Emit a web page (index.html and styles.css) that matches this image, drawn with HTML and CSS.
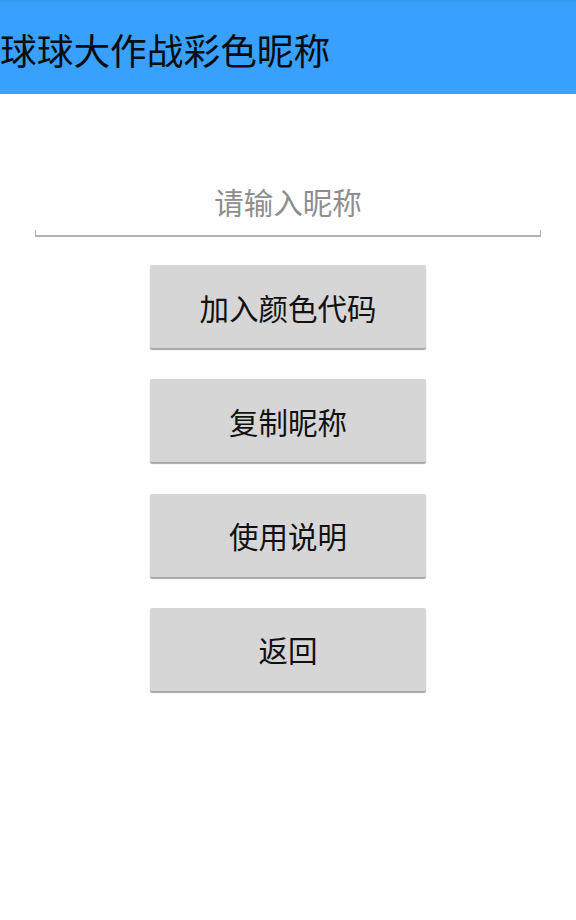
FILE: index.html
```html
<!DOCTYPE html>
<html lang="zh-CN">
<head>
<meta charset="utf-8">
<title>球球大作战彩色昵称</title>
<link rel="stylesheet" href="styles.css">
</head>
<body>
<header class="appbar">
  <h1 class="title">球球大作战彩色昵称</h1>
</header>
<main class="content">
  <div class="field">
    <input class="nick-input" type="text" placeholder="请输入昵称">
    <div class="underline"></div>
  </div>
  <div class="buttons">
    <button class="btn" type="button">加入颜色代码</button>
    <button class="btn" type="button">复制昵称</button>
    <button class="btn" type="button">使用说明</button>
    <button class="btn" type="button">返回</button>
  </div>
</main>
</body>
</html>
```

FILE: styles.css
```css
html, body {
  margin: 0;
  padding: 0;
  background: #ffffff;
}
body {
  font-family: "Noto Sans CJK SC", "Noto Sans", sans-serif;
  width: 576px;
  height: 920px;
  overflow: hidden;
}
.appbar {
  height: 92px;
  background: #38a0fd;
  border-top: 2px solid #3497f0;
  display: flex;
  align-items: center;
}
.title {
  margin: 0;
  padding: 0;
  font-size: 36.7px;
  font-weight: 400;
  color: #0c0c0c;
  line-height: 1;
  position: relative;
  top: 1px;
}
.content {
  display: flex;
  flex-direction: column;
  align-items: center;
}
.field {
  width: 506px;
  margin-top: 78px;
  display: flex;
  flex-direction: column;
}
.nick-input {
  border: none;
  outline: none;
  background: transparent;
  font-family: "Noto Sans CJK SC", "Noto Sans", sans-serif;
  font-size: 29.5px;
  text-align: center;
  height: 58px;
  padding: 0;
  margin: 0;
  color: #222;
}
.nick-input::placeholder {
  color: #8e8e8e;
}
.underline {
  height: 5px;
  border-left: 1.5px solid #b0b0b0;
  border-right: 1.5px solid #b0b0b0;
  border-bottom: 2px solid #b0b0b0;
}
.buttons {
  margin-top: 28px;
  display: flex;
  flex-direction: column;
  gap: 31.3px;
}
.btn {
  width: 276px;
  height: 83px;
  border: none;
  border-radius: 2px;
  background: #d6d6d6;
  box-shadow: 0 1.5px 1px rgba(0, 0, 0, 0.35);
  font-family: "Noto Sans CJK SC", "Noto Sans", sans-serif;
  font-size: 29.5px;
  color: #111;
  padding: 0;
  margin: 0;
}
```
